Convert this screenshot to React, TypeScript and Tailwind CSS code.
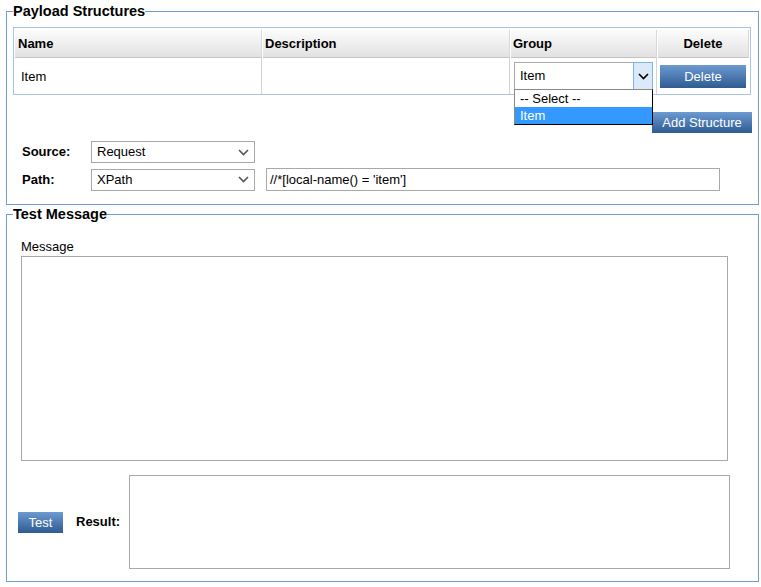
import React from "react";

const font = { fontFamily: '"Liberation Sans", Arial, sans-serif' };

function Chevron({ className = "" }: { className?: string }) {
  return (
    <svg width="11" height="7" viewBox="0 0 11 7" className={className}>
      <path d="M1 1 L5.5 5.5 L10 1" fill="none" stroke="currentColor" strokeWidth="1.6" />
    </svg>
  );
}

function FakeSelect({ value, width }: { value: string; width: string }) {
  return (
    <div className={`${width} h-[22px] border border-[#a9a9a9] bg-white flex items-center justify-between pl-[5px] pr-[5px] text-[13px] text-black`}>
      <span>{value}</span>
      <Chevron className="text-[#555]" />
    </div>
  );
}

function BlueButton({ label, className = "" }: { label: string; className?: string }) {
  return (
    <button className={`bg-gradient-to-b from-[#6c9bd1] to-[#2e5b92] text-white text-[13px] leading-none flex items-center justify-center ${className}`}>
      {label}
    </button>
  );
}

export default function App() {
  return (
    <div className="w-[761px] h-[587px] bg-white text-black pt-[3px] pl-[6px]" style={font}>
      {/* Payload Structures */}
      <fieldset className="w-[753px] h-[202px] border border-[#6e9dd3] p-0 m-0">
        <legend className="ml-[6px] p-0 text-[14.5px] font-bold leading-[17px]">Payload Structures</legend>
        <div className="pl-[6px] pt-[7px]">
          <div className="w-[738px] border border-[#a9c4e6] px-[1px] pt-[2px]">
            <div className="flex gap-[1px] text-[13px]">
              <div className="w-[247px] h-[28px] pl-[3px] flex items-center font-bold bg-gradient-to-b from-[#fcfcfc] to-[#e2e2e2] border-b border-[#c4c4c4] border-r border-r-[#d8d8d8]">Name</div>
              <div className="w-[247px] h-[28px] pl-[2px] flex items-center font-bold bg-gradient-to-b from-[#fcfcfc] to-[#e2e2e2] border-b border-[#c4c4c4] border-r border-r-[#d8d8d8]">Description</div>
              <div className="w-[146px] h-[28px] pl-[2px] flex items-center font-bold bg-gradient-to-b from-[#fcfcfc] to-[#e2e2e2] border-b border-[#c4c4c4] border-r border-r-[#d8d8d8]">Group</div>
              <div className="w-[91px] h-[28px] flex items-center justify-center font-bold bg-gradient-to-b from-[#fcfcfc] to-[#e2e2e2] border-b border-[#c4c4c4] border-r border-r-[#d8d8d8]">Delete</div>
            </div>
            <div className="flex gap-[1px] text-[13px] h-[36px]">
              <div className="w-[247px] pl-[6px] pt-[1px] flex items-center border-r border-[#d4d4d4]">Item</div>
              <div className="w-[247px] border-r border-[#d4d4d4]" />
              <div className="w-[146px] pl-[3px] pt-[4px] border-r border-[#d4d4d4]">
                <div className="relative w-[139px] h-[28px] border border-[#a9a9a9] bg-white flex">
                  <div className="flex-1 pl-[5px] flex items-center">Item</div>
                  <div className="w-[20px] -my-[1px] -mr-[1px] border border-[#7eb4ea] bg-[#dce9f8] flex items-center justify-center">
                    <Chevron className="text-black" />
                  </div>
                  <div className="absolute left-[-1px] top-[26px] w-[139px] bg-white border border-black border-l-[#8a8a8a] border-t-[#8a8a8a] z-10">
                    <div className="h-[17px] pl-[5px] flex items-center">-- Select --</div>
                    <div className="h-[17px] pl-[5px] flex items-center bg-[#3399ff] text-white">Item</div>
                  </div>
                </div>
              </div>
              <div className="w-[91px] pl-[2px] pt-[7px]">
                <BlueButton label="Delete" className="w-[86px] h-[23px]" />
              </div>
            </div>
          </div>

          <div className="w-[739px] flex justify-end mt-[17px]">
            <BlueButton label="Add Structure" className="w-[100px] h-[21px]" />
          </div>

          <div className="pl-[9px] mt-[8px] flex flex-col gap-[5px] text-[13px]">
            <div className="flex items-center">
              <span className="w-[69px] font-bold">Source:</span>
              <FakeSelect value="Request" width="w-[164px]" />
            </div>
            <div className="flex items-center">
              <span className="w-[69px] font-bold">Path:</span>
              <FakeSelect value="XPath" width="w-[164px]" />
              <div className="ml-[11px] w-[454px] h-[23px] border border-[#a9a9a9] flex items-center pl-[3px]">//*[local-name() = 'item']</div>
            </div>
          </div>
        </div>
      </fieldset>

      {/* Test Message */}
      <fieldset className="mt-[1px] w-[753px] h-[376px] border border-[#6e9dd3] p-0 m-0">
        <legend className="ml-[6px] p-0 text-[14.5px] font-bold leading-[17px]">Test Message</legend>
        <div className="pl-[14px] pt-[16px] text-[13px]">
          <div className="leading-[15px]">Message</div>
          <div className="mt-[2px] w-[707px] h-[205px] border border-[#a9a9a9]" />
          <div className="mt-[14px] flex items-center -ml-[3px]">
            <BlueButton label="Test" className="w-[45px] h-[21px]" />
            <span className="ml-[13px] w-[43px] font-bold">Result:</span>
            <div className="ml-[10px] w-[601px] h-[94px] border border-[#a9a9a9]" />
          </div>
        </div>
      </fieldset>
    </div>
  );
}
